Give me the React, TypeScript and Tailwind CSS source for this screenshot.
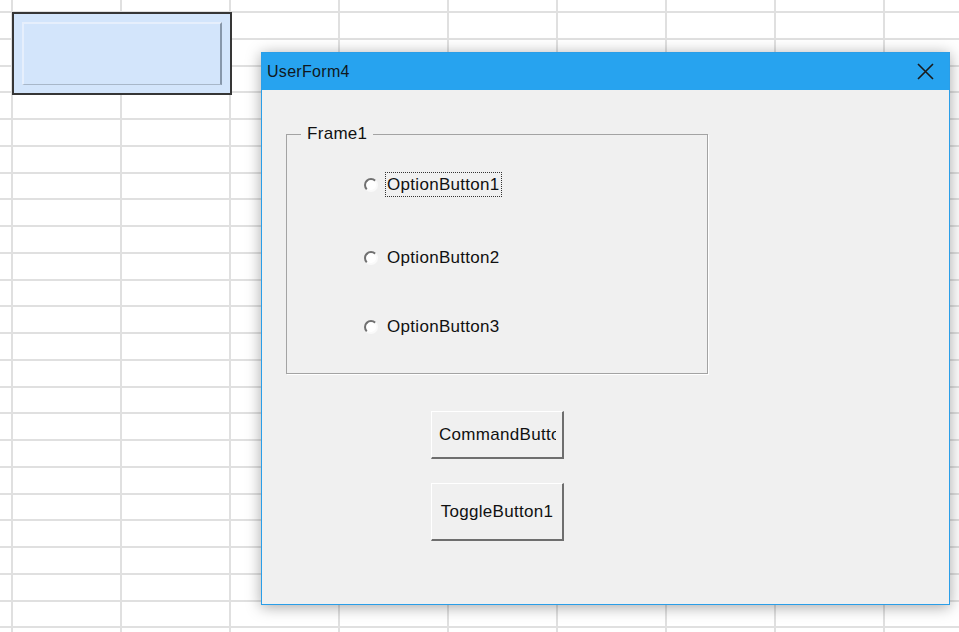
import React from "react";

const ROWS = 25;
const COLS = 10;

function Sheet() {
  return (
    <div className="flex flex-col -mt-[13.75px]">
      {Array.from({ length: ROWS }).map((_, r) => (
        <div key={r} className="flex h-[26.75px] shrink-0 border-b-2 border-[#e0e0e0]">
          {Array.from({ length: COLS }).map((_, c) => (
            <div
              key={c}
              className={
                c === 0
                  ? "w-[13px] shrink-0 border-r-2 border-[#e0e0e0]"
                  : "w-[109px] shrink-0 border-r-2 border-[#e0e0e0]"
              }
            />
          ))}
        </div>
      ))}
    </div>
  );
}

function Radio() {
  return (
    <span className="block w-[14px] h-[14px] shrink-0 rounded-full border-2 border-t-[#707070] border-l-[#707070] border-r-[#fafafa] border-b-[#fafafa] bg-white" />
  );
}

function Option({ label, focused }: { label: string; focused?: boolean }) {
  return (
    <div className="flex items-center h-[25px]">
      <Radio />
      <span
        className={
          focused
            ? "ml-[7px] px-[1px] h-[25px] flex items-center border border-dotted border-[#333]"
            : "ml-[7px] px-[1px] h-[25px] flex items-center border border-transparent"
        }
      >
        {label}
      </span>
    </div>
  );
}

export default function App() {
  return (
    <div
      className="relative w-[959px] h-[632px] overflow-hidden bg-white text-[#111]"
      style={{ fontFamily: '"Liberation Sans", Arial, sans-serif' }}
    >
      <Sheet />

      {/* selected control on the sheet */}
      <div className="absolute left-[12px] top-[12px] w-[220px] h-[83px] border-2 border-[#363636] bg-[#d3e5fb] p-[8px]">
        <div className="w-full h-full border-t-2 border-l-2 border-[#e6effc] border-r-2 border-r-[#8797aa] border-b border-b-[#a8b7c9]" />
      </div>

      {/* UserForm window */}
      <div className="absolute left-[261px] top-[52px] w-[689px] h-[553px] flex flex-col border border-[#2a9ee8] bg-[#f0f0f0] shadow-[0_2px_14px_rgba(0,0,0,0.35)]">
        <div className="h-[37px] shrink-0 flex items-center justify-between bg-[#27a3ef] pl-[5px] pr-[15px]">
          <span className="text-[16px] tracking-[0.3px] text-[#101820]">UserForm4</span>
          <svg width="17" height="17" viewBox="0 0 17 17">
            <path d="M1 1 L16 16 M16 1 L1 16" stroke="#1a1a1a" strokeWidth="1.6" />
          </svg>
        </div>

        <div className="flex-1 flex flex-col pl-[24px] pt-[44px] text-[17px] tracking-[0.3px]">
          {/* Frame1 */}
          <div className="relative w-[422px] h-[240px] border border-[#a3a3a3] shadow-[1px_1px_0_#ffffff]">
            <span className="absolute -top-[11px] left-[14px] px-[6px] leading-[20px] bg-[#f0f0f0]">
              Frame1
            </span>
            <div className="flex flex-col pl-[77px] pt-[37px]">
              <Option label="OptionButton1" focused />
              <div className="mt-[48px]">
                <Option label="OptionButton2" />
              </div>
              <div className="mt-[44px]">
                <Option label="OptionButton3" />
              </div>
            </div>
          </div>

          <div className="flex flex-col ml-[145px] mt-[37px]">
            <div className="w-[133px] h-[48px] flex items-center pl-[7px] border-t border-l border-white border-r-2 border-b-2 border-r-[#6e6e6e] border-b-[#6e6e6e] bg-[#f0f0f0]">
              <span className="block w-[117px] overflow-hidden whitespace-nowrap">CommandButton1</span>
            </div>
            <div className="mt-[24px] w-[133px] h-[58px] flex items-center justify-center whitespace-nowrap border-t border-l border-white border-r-2 border-b-2 border-r-[#6e6e6e] border-b-[#6e6e6e] bg-[#f0f0f0]">
              ToggleButton1
            </div>
          </div>
        </div>
      </div>
    </div>
  );
}
